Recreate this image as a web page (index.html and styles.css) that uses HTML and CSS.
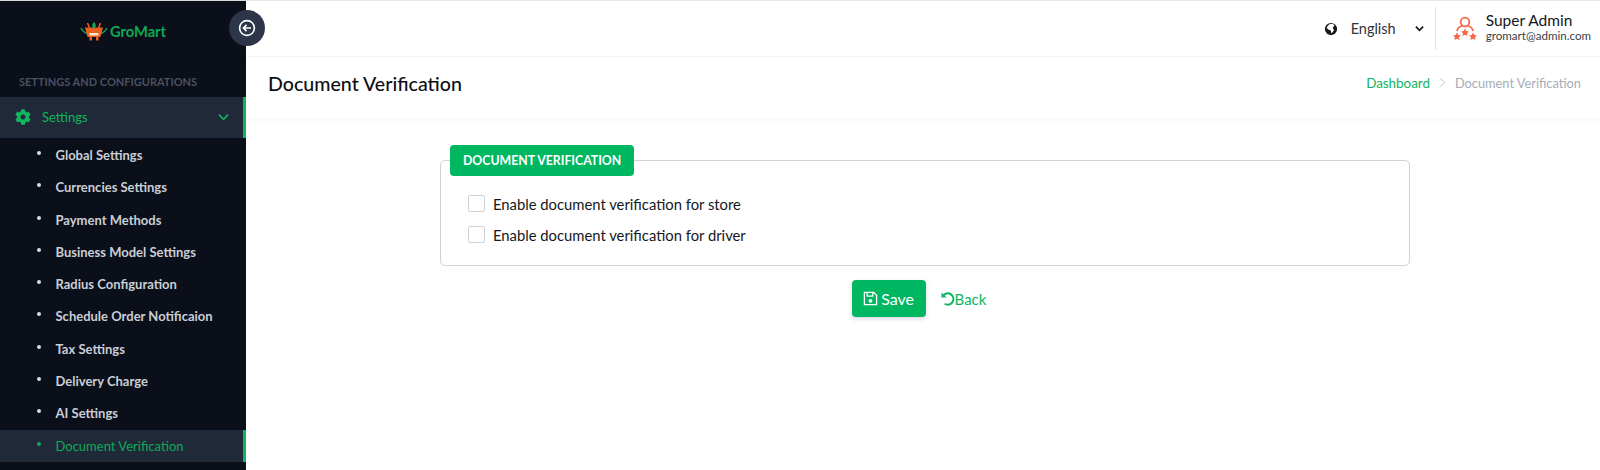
FILE: index.html
```html
<!DOCTYPE html>
<html lang="en">

<head>
    <meta charset="UTF-8">
    <title>Document Verification</title>
    <link rel="stylesheet" href="styles.css">
</head>

<body>
    <aside class="sidebar">
        <div class="brand">
            <svg class="brand-logo" viewBox="0 0 28 20" width="28" height="20">
                <path d="M1 7c2 4 5 5.500 8 6M27 7c-2 4-5 5.500-8 6" fill="none" stroke="#0fa958" stroke-width="1.500"/>
                <path d="M5 6.500h18l-2.500 9.500h-13z" fill="#e8601f"/>
                <path d="M7.500 2l2 5M20.500 2l-2 5" stroke="#e8601f" stroke-width="1.500"/>
                <path d="M14 1c2 1.500 2.500 5.500 0 6.500-2.500-1-2-5 0-6.500z" fill="#0fa958"/>
                <path d="M9.500 12h9v2.500h-9z" fill="#f5e9d0"/>
                <path d="M9.500 16h2.500v3.500h-2.500zM16 16h2.500v3.500h-2.500z" fill="#e8601f"/>
            </svg>
            <span class="brand-name">GroMart</span>
        </div>
        <button class="toggle" type="button">
            <svg viewBox="0 0 20 20" width="18" height="18">
                <circle cx="10" cy="10" r="8.200" fill="none" stroke="#fff" stroke-width="1.800"/>
                <path d="M14.500 10h-8M9.500 6.500L6 10l3.500 3.500" fill="none" stroke="#fff" stroke-width="1.800"/>
            </svg>
        </button>
        <div class="menu-title">SETTINGS AND CONFIGURATIONS</div>
        <div class="menu-head">
            <svg class="gear" viewBox="0 0 512 512" width="16" height="16">
                <path fill="#0fb560" d="M487.4 315.7l-42.6-24.6c4.300-23.200 4.300-47 0-70.200l42.600-24.600c4.900-2.800 7.100-8.600 5.500-14-11.100-35.600-30-67.800-54.700-94.600-3.800-4.100-10-5.100-14.800-2.300L380.800 110c-17.900-15.400-38.500-27.300-60.800-35.100V25.800c0-5.600-3.900-10.500-9.400-11.700-36.700-8.200-74.300-7.800-109.200 0-5.500 1.200-9.400 6.100-9.400 11.700V75c-22.200 7.900-42.800 19.800-60.800 35.100L88.700 85.500c-4.900-2.800-11-1.900-14.800 2.300-24.700 26.700-43.600 58.900-54.700 94.600-1.700 5.400.6 11.200 5.500 14L67.300 221c-4.300 23.200-4.300 47 0 70.200l-42.600 24.600c-4.900 2.800-7.100 8.600-5.500 14 11.100 35.600 30 67.800 54.700 94.600 3.800 4.100 10 5.100 14.800 2.300l42.600-24.600c17.900 15.400 38.500 27.300 60.800 35.100v49.200c0 5.600 3.900 10.500 9.400 11.700 36.700 8.200 74.300 7.800 109.200 0 5.500-1.200 9.400-6.100 9.400-11.700v-49.200c22.200-7.900 42.800-19.800 60.800-35.100l42.600 24.600c4.900 2.800 11 1.900 14.800-2.300 24.700-26.700 43.600-58.900 54.700-94.600 1.500-5.500-.7-11.300-5.600-14.100zM256 336c-44.100 0-80-35.900-80-80s35.900-80 80-80 80 35.900 80 80-35.900 80-80 80z"/>
            </svg>
            <span class="menu-head-text">Settings</span>
            <svg class="chevron" viewBox="0 0 12 8" width="11" height="8">
                <path d="M1 1.500l5 5 5-5" fill="none" stroke="#0fb560" stroke-width="1.800"/>
            </svg>
        </div>
        <ul class="submenu">
            <li>Global Settings</li>
            <li>Currencies Settings</li>
            <li>Payment Methods</li>
            <li>Business Model Settings</li>
            <li>Radius Configuration</li>
            <li>Schedule Order Notificaion</li>
            <li>Tax Settings</li>
            <li>Delivery Charge</li>
            <li>AI Settings</li>
            <li class="active">Document Verification</li>
        </ul>
    </aside>

    <div class="main">
        <header class="topbar">
            <div class="lang">
                <svg viewBox="0 0 16 16" width="14" height="14">
                    <circle cx="8" cy="8" r="7" fill="#15171c"/>
                    <path d="M6 2.500l4-.5 2 2-2 2.500 1.500 3-3 3.500-1-3.500-3-1-1.500-2.500z" fill="#fff"/>
                </svg>
                <span class="lang-name">English</span>
                <svg class="lang-arrow" viewBox="0 0 10 7" width="9" height="7">
                    <path d="M1 1.500l4 4 4-4" fill="none" stroke="#15171c" stroke-width="2"/>
                </svg>
            </div>
            <div class="user">
                <svg class="user-icon" viewBox="0 0 24 26" width="24" height="26">
                    <g fill="none" stroke="#f4694a" stroke-width="1.800">
                        <circle cx="12" cy="6" r="4.300"/>
                        <path d="M4 15c.5-3 3-4.500 5-5M20 15c-.5-3-3-4.500-5-5"/>
                    </g>
                    <g fill="#f4694a">
                        <path d="M12 12.500l1.300 2.500 2.700.4-2 1.900.5 2.700-2.500-1.300-2.500 1.300.5-2.700-2-1.900 2.700-.4z"/>
                        <path d="M4 16.500l1.300 2.500 2.700.4-2 1.900.5 2.700-2.500-1.300-2.500 1.300.5-2.700-2-1.900 2.700-.4z"/>
                        <path d="M20 16.500l1.300 2.500 2.700.4-2 1.900.5 2.700-2.500-1.300-2.500 1.300.5-2.700-2-1.900 2.700-.4z"/>
                    </g>
                </svg>
                <div class="user-info">
                    <div class="user-name">Super Admin</div>
                    <div class="user-email">gromart@admin.com</div>
                </div>
            </div>
        </header>

        <div class="page-head">
            <h1 class="page-title">Document Verification</h1>
            <div class="crumbs">
                <span class="crumb-link">Dashboard</span>
                <svg viewBox="0 0 8 12" width="7" height="11">
                    <path d="M1.500 1l5 5-5 5" fill="none" stroke="#aeb4bb" stroke-width="1"/>
                </svg>
                <span class="crumb-current">Document Verification</span>
            </div>
        </div>

        <form class="content">
            <fieldset class="panel">
                <legend class="panel-title">DOCUMENT VERIFICATION</legend>
                <label class="check"><input type="checkbox"><span>Enable document verification for store</span></label>
                <label class="check"><input type="checkbox"><span>Enable document verification for driver</span></label>
            </fieldset>
            <div class="actions">
                <button type="button" class="btn-save">
                    <svg viewBox="0 0 16 16" width="15" height="15">
                        <path d="M1.500 1.500h10l3 3v10h-13z" fill="none" stroke="#fff" stroke-width="1.400"/>
                        <path d="M4.500 1.500v4h6v-4" fill="none" stroke="#fff" stroke-width="1.400"/>
                        <circle cx="8" cy="10.500" r="2" fill="#fff"/>
                    </svg>
                    Save
                </button>
                <a class="btn-back">
                    <svg viewBox="0 0 16 16" width="15" height="15">
                        <path d="M3.800 4.500A6 6 0 1 1 5 13.600" fill="none" stroke="#0cb562" stroke-width="2.200"/>
                        <path d="M1.500 1.500v5.500h5.500z" fill="#0cb562"/>
                    </svg>
                    Back
                </a>
            </div>
        </form>
    </div>
</body>

</html>
```

FILE: styles.css
```css
/* Reset and base */
* {
    margin: 0;
    padding: 0;
    box-sizing: border-box;
}

body,
input,
button {
    font-family: "Lato", "Open Sans", sans-serif;
}

body {
    height: 470px;
    overflow: hidden;
    display: flex;
    background: #ffffff;
    color: #15171c;
}

/* Sidebar */
.sidebar {
    position: relative;
    width: 246px;
    flex-shrink: 0;
    background: #0b0f19;
    border-top: 1px solid #d8d8d8;
}

.brand {
    height: 59px;
    display: flex;
    align-items: center;
    justify-content: center;
    gap: 2px;
}

.brand-name {
    color: #0fa958;
    font-size: 14.700px;
    font-weight: 700;
}

.toggle {
    position: absolute;
    top: 9px;
    left: 229px;
    width: 36px;
    height: 36px;
    border: none;
    border-radius: 50%;
    background: #2c3648;
    display: flex;
    align-items: center;
    justify-content: center;
    z-index: 2;
}

.menu-title {
    margin-top: 15px;
    padding-left: 19px;
    font-size: 11px;
    font-weight: 700;
    color: #4a5160;
    line-height: 14px;
}

.menu-head {
    margin-top: 8px;
    height: 41px;
    display: flex;
    align-items: center;
    padding: 0 14px 2px 15px;
    background: #1f2937;
    border-right: 3px solid #0cb562;
}

.menu-head-text {
    margin-left: 11px;
    flex: 1;
    font-size: 13px;
    color: #0fb560;
}

.submenu {
    list-style: none;
    margin-top: 1px;
}

.submenu li {
    position: relative;
    height: 32.300px;
    line-height: 32.300px;
    padding-left: 55.500px;
    font-size: 13px;
    font-weight: 700;
    color: #c9ced6;
}

.submenu li::before {
    content: "";
    position: absolute;
    left: 37px;
    top: 12px;
    width: 4px;
    height: 4px;
    border-radius: 50%;
    background: #d8dce2;
}

.submenu li.active {
    background: #1f2937;
    border-right: 3px solid #0cb562;
    color: #0fa958;
    font-weight: 400;
}

.submenu li.active::before {
    background: #0fa958;
}

/* Main */
.main {
    flex: 1;
    min-width: 0;
    background: #ffffff;
}

.topbar {
    height: 57px;
    border-top: 1px solid #e8e8e8;
    display: flex;
    justify-content: flex-end;
    align-items: center;
    padding-right: 9px;
    border-bottom: 1px solid #f4f4f4;
}

.lang {
    display: flex;
    align-items: center;
}

.lang-name {
    margin-left: 13px;
    font-size: 14.500px;
    color: #30343c;
}

.lang-arrow {
    margin-left: 19px;
}

.user {
    display: flex;
    align-items: center;
    height: 43px;
    margin-left: 11px;
    padding-left: 17px;
    border-left: 1px solid #e2e2e2;
}

.user-info {
    margin-left: 9px;
    padding-bottom: 4px;
}

.user-name {
    font-size: 15.500px;
    line-height: 18px;
}

.user-email {
    font-size: 11.600px;
    line-height: 14px;
    color: #3a3e46;
}

.page-head {
    height: 61px;
    display: flex;
    justify-content: space-between;
    align-items: center;
    padding: 0 19px 8px 22px;
    box-shadow: 0 4px 6px rgba(0, 0, 0, 0.025);
}

.page-title {
    font-size: 19.600px;
    font-weight: 500;
    color: #0d0f14;
}

.crumbs {
    display: flex;
    align-items: center;
    gap: 9px;
    padding-bottom: 2px;
}

.crumb-link {
    font-size: 13.400px;
    color: #0fb560;
}

.crumb-current {
    font-size: 12.800px;
    color: #a6acb4;
}

/* Form */
.content {
    padding: 27px 190px 0 194px;
}

.panel {
    height: 121px;
    border: 1px solid #cfd2d6;
    border-radius: 5px;
    padding: 0 27px;
}

.panel-title {
    margin-left: -18px;
    height: 31px;
    line-height: 31px;
    padding: 0 13px;
    border-radius: 4px;
    background: #00b761;
    color: #ffffff;
    font-size: 12.300px;
    font-weight: 700;
}

.check {
    display: flex;
    align-items: center;
    height: 31px;
    font-size: 14.800px;
    color: #15171c;
}

.panel-title + .check {
    margin-top: 12px;
}

.check input {
    appearance: none;
    width: 17px;
    height: 17px;
    margin-right: 8px;
    border: 1px solid #cfd2d6;
    border-radius: 2px;
    background: #ffffff;
}

.actions {
    display: flex;
    justify-content: center;
    align-items: center;
    gap: 14px;
    margin-top: 14px;
    padding-right: 12px;
}

.btn-save {
    width: 74px;
    height: 37px;
    border: none;
    border-radius: 4px;
    background: #00b761;
    color: #ffffff;
    font-size: 16px;
    display: flex;
    align-items: center;
    justify-content: center;
    gap: 3px;
    box-shadow: 0 2px 4px rgba(60, 60, 120, 0.2);
}

.btn-back {
    display: flex;
    align-items: center;
    font-size: 15px;
    color: #0cb562;
}
```
